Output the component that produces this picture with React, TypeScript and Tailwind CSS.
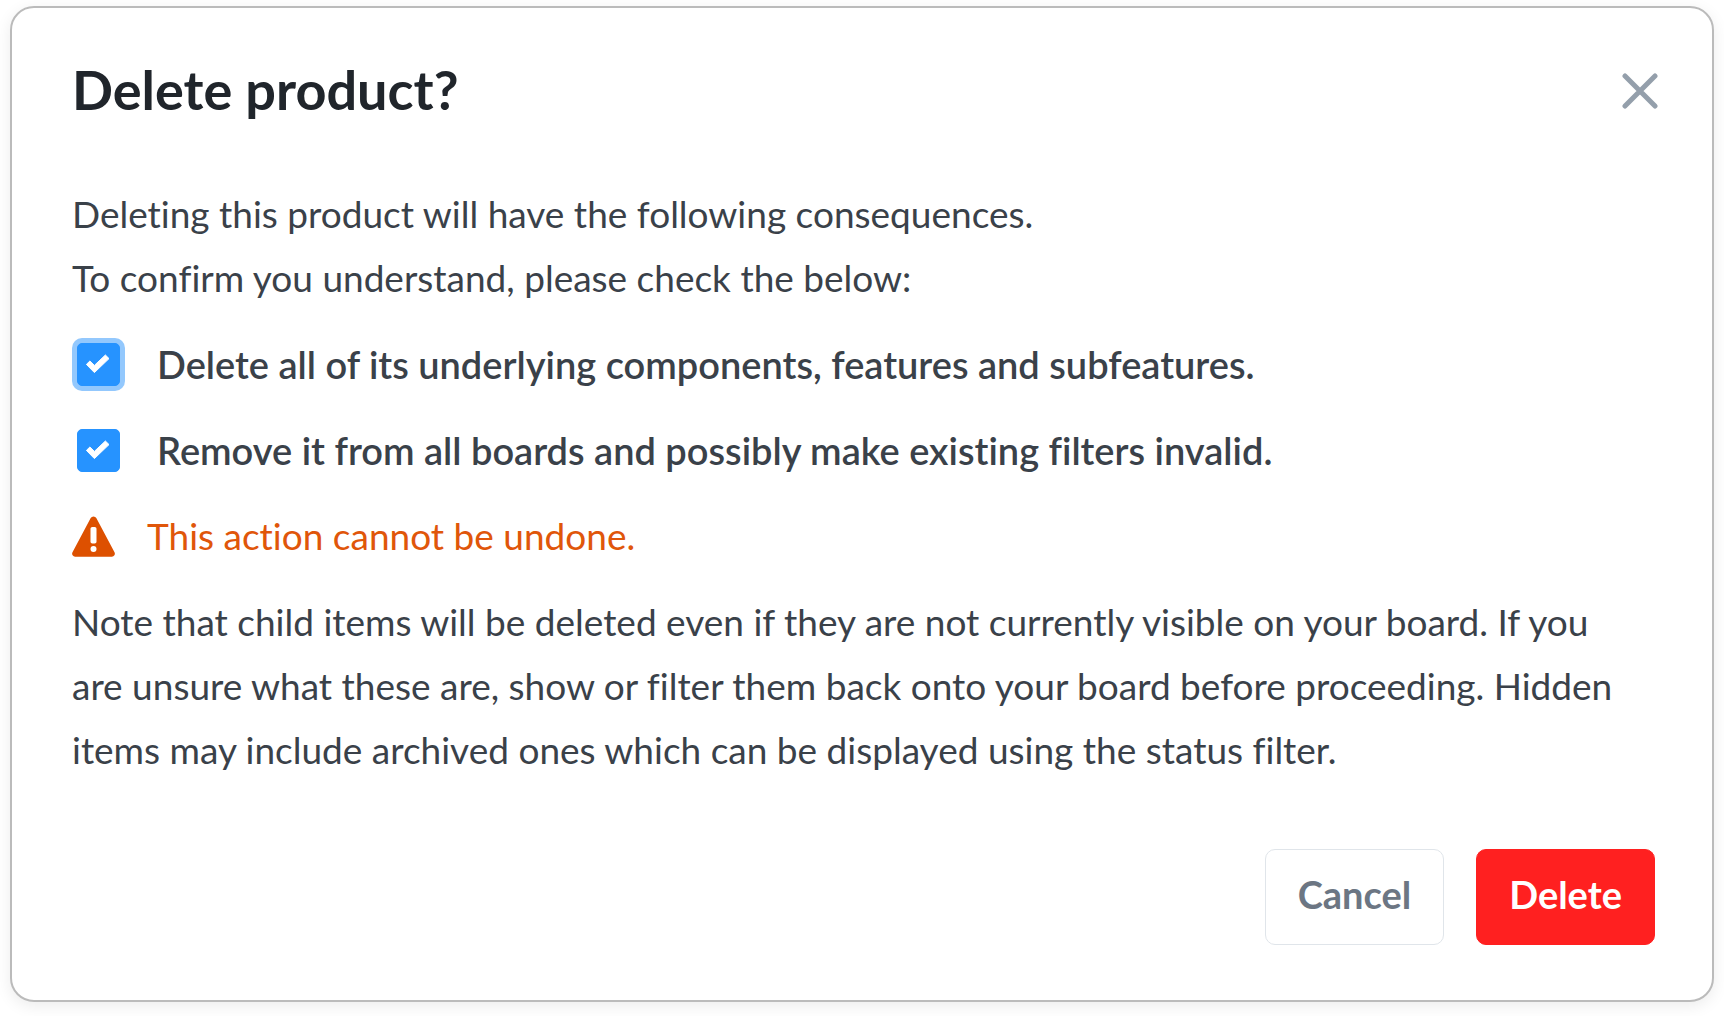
import { useState } from "react";
import type { ReactNode } from "react";

type ConsequenceProps = {
  id: string;
  highlighted?: boolean;
  children: ReactNode;
};

function Consequence({ id, highlighted = false, children }: ConsequenceProps) {
  const [checked, setChecked] = useState(true);
  return (
    <div className="flex items-center gap-8">
      <span
        className={`grid shrink-0 place-items-center rounded-[10px] p-[5px] ${
          highlighted ? "bg-[#93c8fd]" : "bg-transparent"
        }`}
      >
        <input
          id={id}
          type="checkbox"
          checked={checked}
          onChange={(event) => setChecked(event.target.checked)}
          className="peer col-start-1 row-start-1 h-[43px] w-[43px] appearance-none rounded-[5px] border border-[#2693ff] bg-white outline-none checked:bg-[#2693ff]"
        />
        <svg
          viewBox="0 0 43 43"
          aria-hidden="true"
          className="pointer-events-none invisible col-start-1 row-start-1 h-[43px] w-[43px] peer-checked:visible"
        >
          <path
            d="M9.4 21.4L12.9 18l4.5 4.4L28.4 12l3.6 3.6-14.6 14z"
            fill="#fff"
            stroke="#fff"
            strokeWidth="1"
            strokeLinejoin="round"
          />
        </svg>
      </span>
      <label htmlFor={id} className="text-[38px] font-semibold">
        {children}
      </label>
    </div>
  );
}

export default function App() {
  return (
    <main className="min-h-screen bg-white pt-1.5 pr-[10px] pb-3.5 pl-[10px] font-[Lato,sans-serif] text-[37px] leading-[64px] text-[#3a4149] [font-variant-ligatures:none]">
      <section
        role="dialog"
        aria-labelledby="dialog-title"
        className="rounded-3xl border-2 border-[#bbbbbb] bg-white pt-[50px] pr-[57px] pb-[55px] pl-[60px] shadow-[0_4px_16px_rgba(0,0,0,0.08)]"
      >
        <header className="flex items-center justify-between">
          <h1 id="dialog-title" className="text-[54px] font-bold text-[#20252b]">
            Delete product?
          </h1>
          <button type="button" aria-label="Close" className="-mr-1">
            <svg viewBox="0 0 38 38" className="h-[38px] w-[38px]" aria-hidden="true">
              <path d="M4 5l30 30M34 5L4 35" fill="none" stroke="#949fab" strokeWidth="5" strokeLinecap="round" />
            </svg>
          </button>
        </header>

        <div className="mt-[60px] flex flex-col gap-[22px]">
          <p>
            Deleting this product will have the following consequences.
            <br />
            To confirm you understand, please check the below:
          </p>
          <Consequence id="delete-children" highlighted>
            Delete all of its underlying components, features and subfeatures.
          </Consequence>
          <Consequence id="remove-boards">
            Remove it from all boards and possibly make existing filters invalid.
          </Consequence>
          <p className="flex items-center gap-8 text-[#e0560a]">
            <svg viewBox="0 0 43 41" className="h-[41px] w-[43px] shrink-0" aria-hidden="true">
              <path
                d="M18.7 2.1a3.2 3.2 0 0 1 5.6 0l18.2 34.2a3 3 0 0 1-2.7 4.4H3.2a3 3 0 0 1-2.7-4.4z"
                fill="#dd5000"
              />
              <rect x="18.5" y="11" width="6" height="16.5" rx="1.8" fill="#fff" />
              <circle cx="21.5" cy="33" r="3" fill="#fff" />
            </svg>
            This action cannot be undone.
          </p>
          <p className="pr-4">
            Note that child items will be deleted even if they are not currently visible on your board. If you are
            unsure what these are, show or filter them back onto your board before proceeding. Hidden items may include
            archived ones which can be displayed using the status filter.
          </p>
        </div>

        <footer className="mt-[67px] flex justify-end gap-8 text-[38px] font-bold">
          <button type="button" className="rounded-[10px] border border-[#e0e5ea] bg-white px-8 pt-3 pb-[18px] text-[#6c7683]">
            Cancel
          </button>
          <button type="button" className="rounded-[10px] border border-[#ff2020] bg-[#ff2020] px-8 pt-3 pb-[18px] text-white">
            Delete
          </button>
        </footer>
      </section>
    </main>
  );
}
